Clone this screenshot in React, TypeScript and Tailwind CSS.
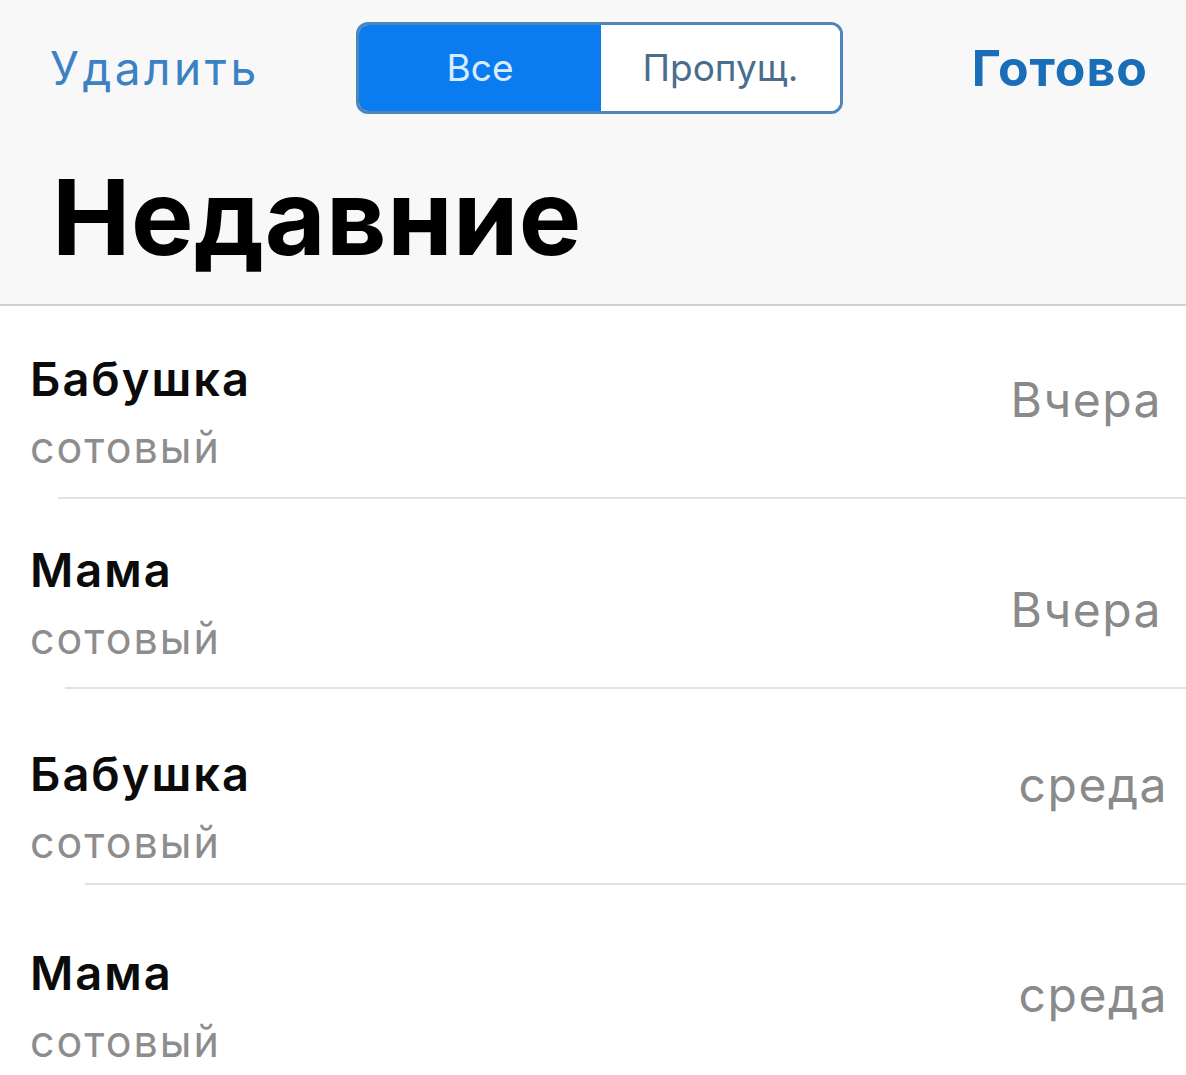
import React from 'react'

type Call = {
    name: string
    kind: string
    when: string
    inset: string
    height: string
    right: string
    leftTop: string
    rightTop: string
}

const calls: Call[] = [
    { name: 'Бабушка', kind: 'сотовый', when: 'Вчера', inset: 'ml-[58px]', height: 'h-[193px]', right: 'pr-[24px]', leftTop: 'mt-[45px]', rightTop: 'mt-[70px]' },
    { name: 'Мама', kind: 'сотовый', when: 'Вчера', inset: 'ml-[65px]', height: 'h-[190px]', right: 'pr-[24px]', leftTop: 'mt-[43px]', rightTop: 'mt-[87px]' },
    { name: 'Бабушка', kind: 'сотовый', when: 'среда', inset: 'ml-[85px]', height: 'h-[196px]', right: 'pr-[18px]', leftTop: 'mt-[57px]', rightTop: 'mt-[72px]' },
    { name: 'Мама', kind: 'сотовый', when: 'среда', inset: 'ml-0 border-transparent', height: 'h-[191px]', right: 'pr-[18px]', leftTop: 'mt-[60px]', rightTop: 'mt-[86px]' },
]

function Row({ call }: { call: Call }) {
    return (
        <div className={`flex flex-col ${call.height}`}>
            <div className={`flex flex-1 items-start justify-between pl-[30px] ${call.right}`}>
                <div className={`flex flex-col ${call.leftTop}`}>
                    <span className="text-[47px] leading-[56px] font-semibold text-[#0b0b0b] tracking-[2px]">
                        {call.name}
                    </span>
                    <span className="text-[43px] leading-[56px] text-[#8d8d8d] mt-[12px] tracking-[2px]">
                        {call.kind}
                    </span>
                </div>
                <span className={`text-[48px] leading-none text-[#8a8a8a] tracking-[1.5px] ${call.rightTop}`}>
                    {call.when}
                </span>
            </div>
            <div className={`border-b-2 border-[#e2e2e2] ${call.inset}`} />
        </div>
    )
}

export default function App() {
    return (
        <div className="w-[1186px] h-[1075px] overflow-hidden bg-white font-['Inter','Liberation_Sans',sans-serif]">
            {/* Header */}
            <div className="h-[306px] bg-[#f8f8f8] border-b-2 border-[#d2d2d2] flex flex-col">
                <div className="flex items-center mt-[22px] h-[92px]">
                    <div className="w-[356px] pl-[50px]">
                        <span className="text-[46px] text-[#3b82c4] tracking-[3.5px]">Удалить</span>
                    </div>
                    <div className="w-[487px] h-[92px] flex rounded-[12px] border-[3px] border-[#4f86b8] overflow-hidden">
                        <div className="w-[242px] bg-[#0a7cf0] flex items-center justify-center">
                            <span className="text-[37px] text-[#d9ecff]">Все</span>
                        </div>
                        <div className="flex-1 bg-white flex items-center justify-center">
                            <span className="text-[37px] text-[#4b6d8c]">Пропущ.</span>
                        </div>
                    </div>
                    <div className="flex-1 flex justify-end pr-[38px]">
                        <span className="text-[50px] font-bold text-[#1a6eb8] tracking-[1px]">Готово</span>
                    </div>
                </div>
                <h1 className="mt-[50px] pl-[52px] text-[105px] leading-none font-bold text-black tracking-[0.5px]">
                    Недавние
                </h1>
            </div>

            {/* Recents list */}
            <div className="flex flex-col">
                {calls.map((c, i) => (
                    <Row key={i} call={c} />
                ))}
            </div>
        </div>
    )
}
